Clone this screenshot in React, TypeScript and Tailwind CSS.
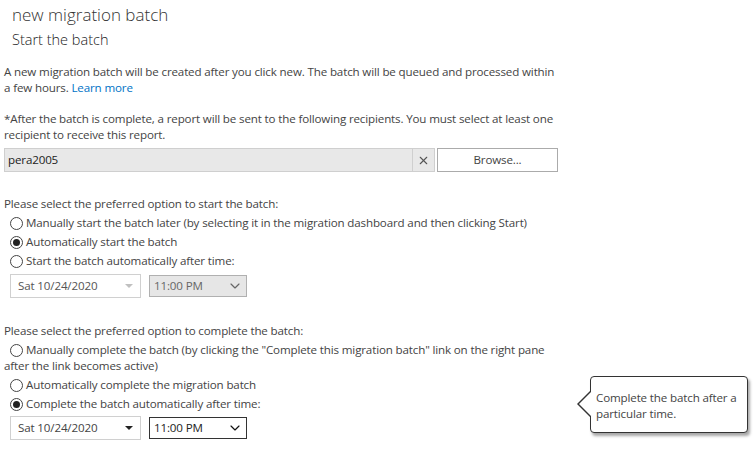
import { ChevronDown, X } from "lucide-react"

function Radio({ checked, label, className = "" }: { checked?: boolean; label: React.ReactNode; className?: string }) {
  return (
    <div className={`flex items-start ${className}`}>
      <span className="mt-[2px] mr-[3px] ml-[6px] flex h-[13px] w-[13px] shrink-0 items-center justify-center rounded-full border border-[#444] bg-white">
        {checked && <span className="h-[7px] w-[7px] rounded-full bg-[#222]" />}
      </span>
      <span>{label}</span>
    </div>
  )
}

function DateTime({ disabled }: { disabled?: boolean }) {
  return (
    <div className="ml-[10px] flex items-center gap-[8px]">
      <div className="flex h-[24px] w-[131px] items-center justify-between border border-[#d0d0d0] bg-white pl-[7px] pr-[7px]">
        <span className={disabled ? "text-[#555]" : "text-[#444]"}>Sat 10/24/2020</span>
        <span
          className={`h-0 w-0 border-x-[4px] border-t-[4px] border-x-transparent ${
            disabled ? "border-t-[#c0c0c0]" : "border-t-[#222]"
          }`}
        />
      </div>
      <div
        className={`flex h-[22px] w-[98px] items-center justify-between border pl-[4px] pr-[3px] ${
          disabled ? "border-[#b0b0b0] bg-[#e6e6e6] text-[#666]" : "border-[#333] bg-white text-[#222]"
        }`}
      >
        <span>11:00 PM</span>
        <ChevronDown className={`h-[16px] w-[16px] ${disabled ? "text-[#666]" : "text-[#111]"}`} strokeWidth={1.75} />
      </div>
    </div>
  )
}

export default function App() {
  return (
    <div className="relative h-[449px] w-[753px] overflow-hidden bg-white font-['Segoe_UI','Open_Sans',sans-serif] text-[11.6px] leading-[16px] tracking-[-0.15px] text-[#444]">
      {/* Header */}
      <div className="pl-[12px] pt-[4px]">
        <h1 className="text-[17px] font-light leading-[22px] tracking-normal text-[#333]">new migration batch</h1>
        <h2 className="mt-[5px] text-[14.5px] font-light leading-[18px] tracking-normal text-[#222]">Start the batch</h2>
      </div>

      <div className="px-[4px]">
        <p className="mt-[15px] whitespace-nowrap">
          A new migration batch will be created after you click new. The batch will be queued and processed within
          <br />
          a few hours. <a className="text-[#0072c6]">Learn more</a>
        </p>

        <p className="mt-[15px] whitespace-nowrap">
          *After the batch is complete, a report will be sent to the following recipients. You must select at least one
          <br />
          recipient to receive this report.
        </p>

        {/* Recipients */}
        <div className="mt-[5px] flex items-center gap-[2px]">
          <div className="flex h-[24px] w-[431px] items-center border border-[#cfcfcf] bg-[#e8e8e8]">
            <span className="flex-1 pl-[3px] text-[#222]">pera2005</span>
            <span className="flex h-full w-[22px] items-center justify-center border-l border-[#cfcfcf]">
              <X className="h-[13px] w-[13px] text-[#555]" strokeWidth={2} />
            </span>
          </div>
          <button className="h-[24px] w-[121px] border border-[#ababab] bg-white text-[#444]">Browse...</button>
        </div>

        {/* Start options */}
        <p className="mt-[24px]">Please select the preferred option to start the batch:</p>
        <div className="mt-[3px] flex flex-col gap-[3px]">
          <Radio label="Manually start the batch later (by selecting it in the migration dashboard and then clicking Start)" />
          <Radio checked label="Automatically start the batch" />
          <Radio label="Start the batch automatically after time:" />
        </div>
      </div>
      <div className="mt-[5px]">
        <DateTime disabled />
      </div>

      <div className="px-[4px]">
        {/* Complete options */}
        <p className="mt-[25px]">Please select the preferred option to complete the batch:</p>
        <div className="mt-[3px] flex w-[565px] flex-col gap-[3px]">
          <div>
            <Radio label={'Manually complete the batch (by clicking the "Complete this migration batch" link on the right pane'} />
            <div>after the link becomes active)</div>
          </div>
          <Radio label="Automatically complete the migration batch" />
          <Radio checked label="Complete the batch automatically after time:" />
        </div>
      </div>
      <div className="mt-[4px]">
        <DateTime />
      </div>

      {/* Tooltip */}
      <div className="absolute left-[590px] top-[376px] h-[57px] w-[158px] rounded-[4px] border border-[#333] bg-white pl-[5px] pr-[3px] pt-[13px] text-[#444] shadow-[2px_3px_3px_rgba(0,0,0,0.35)]">
        Complete the batch after a particular time.
        <span className="absolute left-[-14px] top-[14px] h-0 w-0 border-y-[13px] border-r-[13px] border-y-transparent border-r-[#333]" />
        <span className="absolute left-[-12px] top-[15px] h-0 w-0 border-y-[12px] border-r-[12px] border-y-transparent border-r-white" />
      </div>
    </div>
  )
}
